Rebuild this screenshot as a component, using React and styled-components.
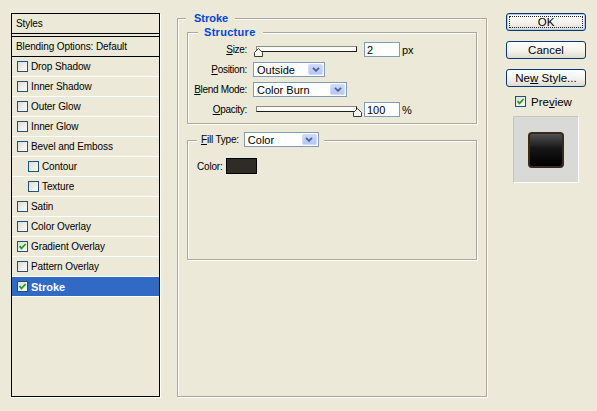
import React from "react";
import styled, { createGlobalStyle, css } from "styled-components";

const GlobalStyle = createGlobalStyle`
  html, body {
    margin: 0;
    padding: 0;
    background: #ece9d8;
  }
  body {
    font-family: "Liberation Sans", Arial, sans-serif;
    font-size: 10px;
    color: #000;
  }
`;

const Dialog = styled.div`
  width: 597px;
  height: 411px;
  box-sizing: border-box;
  padding: 13px 0 0 11px;
  display: flex;
  align-items: flex-start;
  background: #ece9d8;
`;

/* left list of layer styles */
const StylesPanel = styled.div`
  width: 149px;
  height: 384px;
  box-sizing: border-box;
  border: 1px solid #000;
  box-shadow: 1px 1px 0 #fff;
  display: flex;
  flex-direction: column;
`;

const PanelHeader = styled.div`
  height: 20px;
  box-sizing: border-box;
  border-bottom: 1px solid #000;
  padding-left: 4px;
  display: flex;
  align-items: center;
  letter-spacing: -0.1px;
`;

const BlendingRow = styled(PanelHeader)`
  height: 21px;
  margin-top: 2px;
  border-top: 1px solid #000;
`;

const StyleRow = styled.div`
  height: 20px;
  box-sizing: border-box;
  border-bottom: 1px solid #fff;
  padding-left: ${(p) => (p.$indent ? 16 : 5)}px;
  display: flex;
  align-items: center;
  letter-spacing: -0.1px;
  ${(p) =>
    p.$selected &&
    css`
      background: #316ac5;
      color: #fff;
      font-weight: bold;
      font-size: 11px;
      letter-spacing: 0;
    `}
`;

const Box = styled.span`
  width: 11px;
  height: 11px;
  box-sizing: border-box;
  border: 1px solid #1c5180;
  background: linear-gradient(135deg, #dcdcd4 0%, #f4f4f0 70%, #fff 100%);
  display: inline-flex;
  flex-shrink: 0;
`;

const RowText = styled.span`
  margin-left: 3px;
`;

function Check({ checked }) {
  return (
    <Box>
      {checked && (
        <svg width="9" height="9" viewBox="0 0 9 9">
          <path d="M1.5 4.2 L3.5 6.4 L7.6 2" fill="none" stroke="#21a121" strokeWidth="1.8" />
        </svg>
      )}
    </Box>
  );
}

/* etched group boxes */
const Group = styled.div`
  position: relative;
  box-sizing: border-box;
  border: 1px solid #aca899;
  box-shadow: inset 1px 1px 0 #fff, 1px 1px 0 #fff;
  height: ${(p) => p.$h}px;
  ${(p) => p.$w && `width: ${p.$w}px;`}
  margin-top: ${(p) => p.$mt || 0}px;
  padding: ${(p) => p.$pad || "0"};
`;

const Legend = styled.div`
  position: absolute;
  top: ${(p) => p.$top}px;
  left: ${(p) => p.$left}px;
  height: ${(p) => p.$hgt || 13}px;
  padding: ${(p) => p.$pad};
  background: #ece9d8;
  display: flex;
  align-items: center;
  gap: 5px;
`;

const Title = styled.span`
  color: #0046d5;
  font-weight: bold;
  font-size: 11px;
  letter-spacing: ${(p) => p.$ls || 0}px;
`;

const Rows = styled.div`
  display: flex;
  flex-direction: column;
  gap: 5px;
  padding-top: 9px;
`;

const Row = styled.div`
  display: flex;
  align-items: center;
  height: 15px;
`;

const Label = styled.span`
  width: 59px;
  margin-right: 6px;
  text-align: right;
  letter-spacing: -0.3px;
  white-space: nowrap;
`;

const Slider = styled.div`
  position: relative;
  width: 108px;
  height: 15px;
`;

const Track = styled.div`
  margin: 4px 0 0 3px;
  width: 101px;
  height: 6px;
  box-sizing: border-box;
  border: 1px solid;
  border-color: #8e8b7c #1e1e1e #1e1e1e #8e8b7c;
  background: #fbfbf7;
`;

const Thumb = styled.svg`
  position: absolute;
  top: 6px;
  width: 9px;
  height: 9px;
`;

const Field = styled.div`
  width: 36px;
  height: 15px;
  box-sizing: border-box;
  border: 1px solid #7f9db9;
  background: #fff;
  margin-left: 3px;
  padding-left: 2px;
  display: flex;
  align-items: center;
  font-size: 11px;
`;

const Unit = styled.span`
  margin-left: 2px;
  font-size: 11px;
`;

const SelectBox = styled.div`
  width: ${(p) => p.$w}px;
  height: 15px;
  box-sizing: border-box;
  border: 1px solid #7f9db9;
  background: #fff;
  display: flex;
  align-items: center;
  justify-content: space-between;
  padding: 0 1px 0 3px;
  font-size: 11px;
`;

const DropButton = styled.span`
  width: 15px;
  height: 11px;
  box-sizing: border-box;
  border: 1px solid #d2dcf8;
  border-radius: 2px;
  background: linear-gradient(#ccd9fb, #b3c6f5);
  display: flex;
  align-items: center;
  justify-content: center;
`;

function Select({ value, width }) {
  return (
    <SelectBox $w={width}>
      <span>{value}</span>
      <DropButton>
        <svg width="8" height="5" viewBox="0 0 8 5">
          <path d="M1 0.8 L4 3.8 L7 0.8" fill="none" stroke="#4d6185" strokeWidth="1.8" />
        </svg>
      </DropButton>
    </SelectBox>
  );
}

function RangeSlider({ frac }) {
  return (
    <Slider>
      <Track />
      <Thumb viewBox="0 0 9 9" style={{ left: Math.round(frac * 100) }}>
        <polygon points="0.5,8.5 0.5,4.5 4.5,0.5 8.5,4.5 8.5,8.5" fill="#f7f7f2" stroke="#3a3a3a" />
      </Thumb>
    </Slider>
  );
}

const ColorRow = styled.div`
  display: flex;
  align-items: center;
  gap: 4px;
  letter-spacing: -0.2px;
`;

const Swatch = styled.div`
  width: 31px;
  height: 16px;
  box-sizing: border-box;
  border: 1px solid #000;
  background: ${(p) => p.$color};
`;

/* right column */
const Side = styled.div`
  margin-left: 19px;
  width: 80px;
  display: flex;
  flex-direction: column;
`;

const Button = styled.button`
  width: 80px;
  height: 18px;
  margin-bottom: 10px;
  box-sizing: border-box;
  padding: 0;
  border: 1px solid #003c74;
  border-radius: 3px;
  background: linear-gradient(#ffffff 0%, #f3f2ec 55%, #dedbd0 100%);
  font-family: "Liberation Sans", Arial, sans-serif;
  font-size: 11.5px;
  color: #000;
  ${(p) =>
    p.$default &&
    css`
      box-shadow: inset 0 0 0 1px #b6c8f2;
      outline: 1px dotted #222;
      outline-offset: -4px;
    `}
`;

const PreviewRow = styled.label`
  display: flex;
  align-items: center;
  gap: 5px;
  margin-top: -1px;
  padding-left: 9px;
  height: 11px;
  font-size: 11.5px;
`;

const PreviewWell = styled.div`
  margin: 9px 0 0 7px;
  width: 66px;
  height: 67px;
  box-sizing: border-box;
  border: 1px solid;
  border-color: #c4c4c0 #fdfdfd #fdfdfd #c4c4c0;
  background: #d9d9d8;
  display: flex;
  align-items: center;
  justify-content: center;
`;

const PreviewTile = styled.div`
  width: 36px;
  height: 36px;
  box-sizing: border-box;
  border: 2px solid #3a2818;
  border-radius: 4px;
  background: linear-gradient(#505050 0%, #161616 45%, #000 100%);
`;

const styleItems = [
  { name: "Drop Shadow" },
  { name: "Inner Shadow" },
  { name: "Outer Glow" },
  { name: "Inner Glow" },
  { name: "Bevel and Emboss" },
  { name: "Contour", indent: true },
  { name: "Texture", indent: true },
  { name: "Satin" },
  { name: "Color Overlay" },
  { name: "Gradient Overlay", checked: true },
  { name: "Pattern Overlay" },
  { name: "Stroke", checked: true, selected: true },
];

export default function App() {
  return (
    <>
      <GlobalStyle />
      <Dialog>
        <StylesPanel>
          <PanelHeader>Styles</PanelHeader>
          <BlendingRow>Blending Options: Default</BlendingRow>
          {styleItems.map((s) => (
            <StyleRow key={s.name} $indent={s.indent} $selected={s.selected}>
              <Check checked={s.checked} />
              <RowText>{s.name}</RowText>
            </StyleRow>
          ))}
        </StylesPanel>

        <Group $w={310} $h={379} $mt={5} $pad="0 9px 0 9px" style={{ marginLeft: 17 }}>
          <Legend $top={-8} $left={8} $pad="0 7px 0 8px">
            <Title>Stroke</Title>
          </Legend>

          <Group $h={92} $mt={13}>
            <Legend $top={-8} $left={10} $pad="0 7px 0 6px">
              <Title $ls={0.3}>Structure</Title>
            </Legend>
            <Rows>
              <Row>
                <Label><u>S</u>ize:</Label>
                <RangeSlider frac={0.008} />
                <Field>2</Field>
                <Unit>px</Unit>
              </Row>
              <Row>
                <Label><u>P</u>osition:</Label>
                <Select value="Outside" width={72} />
              </Row>
              <Row>
                <Label><u>B</u>lend Mode:</Label>
                <Select value="Color Burn" width={94} />
              </Row>
              <Row>
                <Label><u>O</u>pacity:</Label>
                <RangeSlider frac={1} />
                <Field>100</Field>
                <Unit>%</Unit>
              </Row>
            </Rows>
          </Group>

          <Group $h={120} $mt={16} $pad="17px 0 0 9px">
            <Legend $top={-9} $left={9} $hgt={15} $pad="0 5px 0 4px">
              <span style={{ letterSpacing: "-0.2px" }}><u>F</u>ill Type:</span>
              <Select value="Color" width={75} />
            </Legend>
            <ColorRow>
              <span>Color:</span>
              <Swatch $color="#2f2b27" />
            </ColorRow>
          </Group>
        </Group>

        <Side>
          <Button $default>OK</Button>
          <Button>Cancel</Button>
          <Button>Ne<u>w</u> Style...</Button>
          <PreviewRow>
            <Check checked />
            <span>Pre<u>v</u>iew</span>
          </PreviewRow>
          <PreviewWell>
            <PreviewTile />
          </PreviewWell>
        </Side>
      </Dialog>
    </>
  );
}
